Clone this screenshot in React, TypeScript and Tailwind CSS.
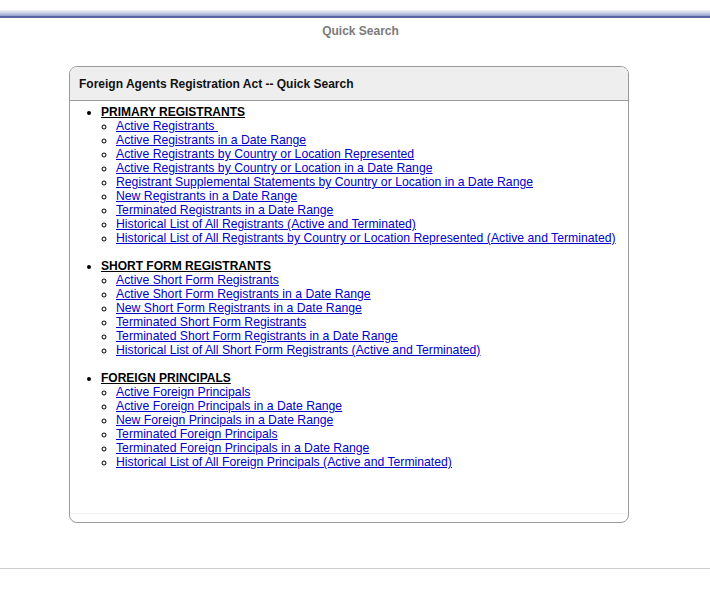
import React from "react";

const primary = [
  "Active Registrants ",
  "Active Registrants in a Date Range",
  "Active Registrants by Country or Location Represented",
  "Active Registrants by Country or Location in a Date Range",
  "Registrant Supplemental Statements by Country or Location in a Date Range",
  "New Registrants in a Date Range",
  "Terminated Registrants in a Date Range",
  "Historical List of All Registrants (Active and Terminated)",
  "Historical List of All Registrants by Country or Location Represented (Active and Terminated)",
];
const shortForm = [
  "Active Short Form Registrants",
  "Active Short Form Registrants in a Date Range",
  "New Short Form Registrants in a Date Range",
  "Terminated Short Form Registrants",
  "Terminated Short Form Registrants in a Date Range",
  "Historical List of All Short Form Registrants (Active and Terminated)",
];
const principals = [
  "Active Foreign Principals",
  "Active Foreign Principals in a Date Range",
  "New Foreign Principals in a Date Range",
  "Terminated Foreign Principals",
  "Terminated Foreign Principals in a Date Range",
  "Historical List of All Foreign Principals (Active and Terminated)",
];

function Section({ title, items, last }: { title: string; items: string[]; last?: boolean }) {
  return (
    <li className={last ? "" : "mb-[14px]"}>
      <span className="font-bold underline text-black text-[12px]">{title}</span>
      <ul className="list-[circle] pl-[15px]">
        {items.map((t) => (
          <li key={t}>
            <a href="#" className="text-[#0000cc] underline whitespace-pre text-[12.23px]">
              {t}
            </a>
          </li>
        ))}
      </ul>
    </li>
  );
}

export default function App() {
  return (
    <div
      className="bg-white min-h-[595px] text-[12px] leading-[14px]"
      style={{ fontFamily: '"Liberation Sans", Arial, sans-serif' }}
    >
      <div className="h-[10px]" />
      <div className="h-[8px] bg-gradient-to-b from-[#f2f3fa] via-[#c9cfe6] to-[#8f9bcb] border-b-2 border-[#56649f]" />
      <div className="text-center font-bold text-[#7a7a7a] mt-[6px] pl-[11px] leading-[14px]">Quick Search</div>
      <div className="ml-[69px] w-[560px] mt-[28px] h-[457px] border border-[#9a9a9a] rounded-[8px] overflow-hidden flex flex-col">
        <div className="h-[34px] bg-[#eeeeee] border-b border-[#9a9a9a] flex items-center pl-[9px] font-bold text-[#111]">
          Foreign Agents Registration Act -- Quick Search
        </div>
        <div className="flex-1 pt-[4px] leading-[14px]">
          <ul className="list-disc pl-[31px]">
            <Section title="PRIMARY REGISTRANTS" items={primary} />
            <Section title="SHORT FORM REGISTRANTS" items={shortForm} />
            <Section title="FOREIGN PRINCIPALS" items={principals} last />
          </ul>
        </div>
        <div className="mb-[8px] mx-[1px] border-b border-[#f3f3f3]" />
      </div>
      <div className="mt-[45px] border-t border-[#cccccc]" />
    </div>
  );
}
